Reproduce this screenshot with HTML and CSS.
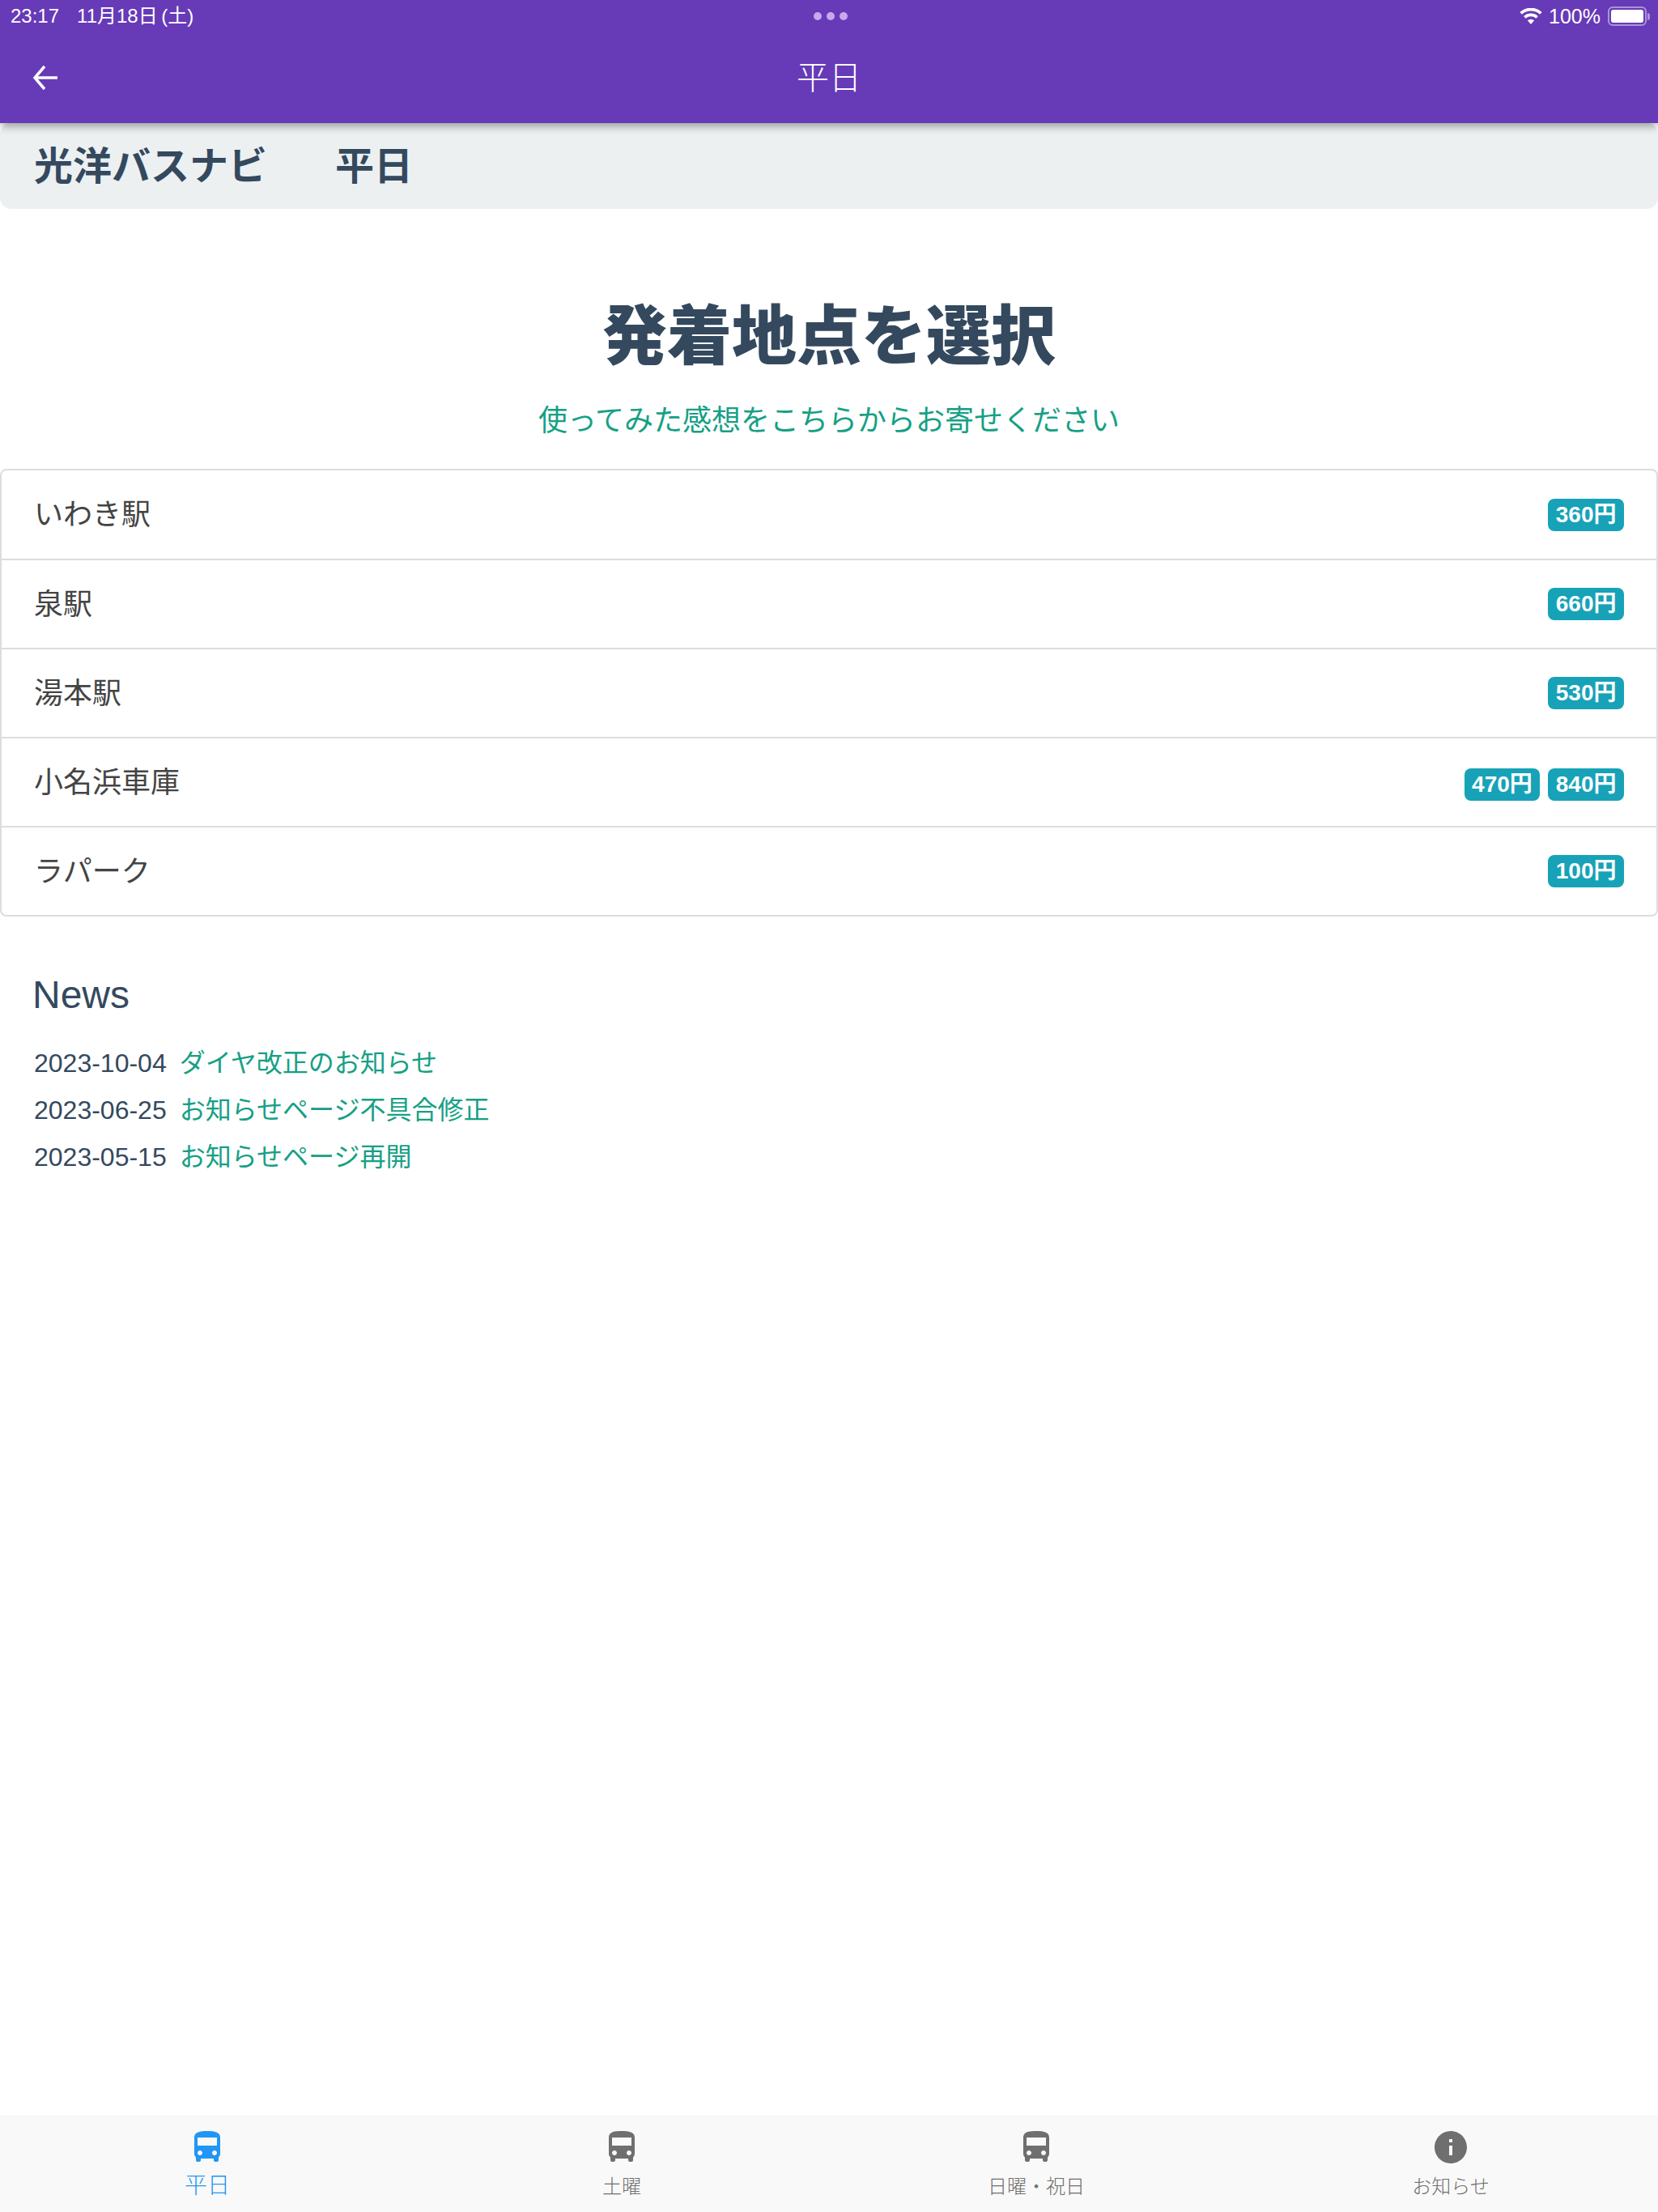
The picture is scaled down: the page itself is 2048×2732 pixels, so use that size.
FILE: index.html
```html
<!DOCTYPE html>
<html lang="ja">
<head>
<meta charset="utf-8">
<title>平日</title>
<link rel="stylesheet" href="styles.css">
</head>
<body>
<div class="page">
  <header class="header">
    <div class="status">
      <div class="status-left"><span>23:17</span><span class="status-date">11月18日 (土)</span></div>
      <div class="status-dots"><i></i><i></i><i></i></div>
      <div class="status-right">
        <svg class="wifi" viewBox="0 0 28 20"><path d="M14 20 9.800 15.200a6.400 6.400 0 0 1 8.400 0zM7.600 12.700 5.100 10a13.400 13.400 0 0 1 17.800 0l-2.500 2.700a9.800 9.800 0 0 0-12.800 0zM3 7.700.3 4.900a20.500 20.500 0 0 1 27.400 0L25 7.700a16.800 16.800 0 0 0-22 0z"/></svg>
        <span>100%</span>
        <div class="battery"><div class="battery-body"><div class="battery-fill"></div></div><div class="battery-cap"></div></div>
      </div>
    </div>
    <div class="toolbar">
      <svg class="back" viewBox="0 0 32 32"><path d="M31 16H3M15 2 3 16l12 14"/></svg>
      <div class="toolbar-title">平日</div>
    </div>
  </header>

  <main class="content">
    <div class="subhead"><span>光洋バスナビ</span><span class="subhead-day">平日</span></div>

    <div class="intro">
      <h1>発着地点を選択</h1>
      <a class="intro-link">使ってみた感想をこちらからお寄せください</a>
    </div>

    <ul class="list">
      <li class="row"><span class="label">いわき駅</span><span class="fares"><b class="fare">360円</b></span></li>
      <li class="row"><span class="label">泉駅</span><span class="fares"><b class="fare">660円</b></span></li>
      <li class="row"><span class="label">湯本駅</span><span class="fares"><b class="fare">530円</b></span></li>
      <li class="row"><span class="label">小名浜車庫</span><span class="fares fares-low"><b class="fare">470円</b><b class="fare">840円</b></span></li>
      <li class="row"><span class="label">ラパーク</span><span class="fares"><b class="fare">100円</b></span></li>
    </ul>

    <section class="news">
      <h3>News</h3>
      <p><span class="date">2023-10-04</span><a>ダイヤ改正のお知らせ</a></p>
      <p><span class="date">2023-06-25</span><a>お知らせページ不具合修正</a></p>
      <p><span class="date">2023-05-15</span><a>お知らせページ再開</a></p>
    </section>
  </main>

  <nav class="tabs">
    <div class="tab tab-active">
      <svg viewBox="0 0 24 24"><path d="M4 16c0 .88.39 1.670 1 2.220V20c0 .55.45 1 1 1h1c.55 0 1-.45 1-1v-1h8v1c0 .55.45 1 1 1h1c.55 0 1-.45 1-1v-1.780c.61-.55 1-1.340 1-2.220V6c0-3.500-3.580-4-8-4s-8 .5-8 4v10zm3.500 1c-.83 0-1.500-.67-1.500-1.500S6.670 14 7.500 14s1.500.67 1.500 1.500S8.330 17 7.500 17zm9 0c-.83 0-1.500-.67-1.500-1.500s.67-1.500 1.500-1.500 1.500.67 1.500 1.500-.67 1.500-1.500 1.500zm1.500-6H6V6h12v5z"/></svg>
      <span>平日</span>
    </div>
    <div class="tab">
      <svg viewBox="0 0 24 24"><path d="M4 16c0 .88.39 1.670 1 2.220V20c0 .55.45 1 1 1h1c.55 0 1-.45 1-1v-1h8v1c0 .55.45 1 1 1h1c.55 0 1-.45 1-1v-1.780c.61-.55 1-1.340 1-2.220V6c0-3.500-3.580-4-8-4s-8 .5-8 4v10zm3.500 1c-.83 0-1.500-.67-1.500-1.500S6.670 14 7.500 14s1.500.67 1.500 1.500S8.330 17 7.500 17zm9 0c-.83 0-1.500-.67-1.500-1.500s.67-1.500 1.500-1.500 1.500.67 1.500 1.500-.67 1.500-1.500 1.500zm1.500-6H6V6h12v5z"/></svg>
      <span>土曜</span>
    </div>
    <div class="tab">
      <svg viewBox="0 0 24 24"><path d="M4 16c0 .88.39 1.670 1 2.220V20c0 .55.45 1 1 1h1c.55 0 1-.45 1-1v-1h8v1c0 .55.45 1 1 1h1c.55 0 1-.45 1-1v-1.780c.61-.55 1-1.340 1-2.220V6c0-3.500-3.580-4-8-4s-8 .5-8 4v10zm3.500 1c-.83 0-1.500-.67-1.500-1.500S6.670 14 7.500 14s1.500.67 1.500 1.500S8.330 17 7.500 17zm9 0c-.83 0-1.500-.67-1.500-1.500s.67-1.500 1.500-1.500 1.500.67 1.500 1.500-.67 1.500-1.500 1.500zm1.500-6H6V6h12v5z"/></svg>
      <span>日曜・祝日</span>
    </div>
    <div class="tab">
      <svg viewBox="0 0 24 24"><path d="M12 2C6.480 2 2 6.480 2 12s4.480 10 10 10 10-4.480 10-10S17.520 2 12 2zm1 15h-2v-6h2v6zm0-8h-2V7h2v2z"/></svg>
      <span>お知らせ</span>
    </div>
  </nav>
</div>
</body>
</html>
```
FILE: styles.css
```css
* { box-sizing: border-box; }
html, body { margin: 0; padding: 0; background: #fff; }
body { font-family: "Liberation Sans", "Noto Sans CJK JP", sans-serif; color: #444; }
.page { display: flex; flex-direction: column; height: 2732px; overflow: hidden; }

.header { background: #673ab7; color: #fff; height: 152px; position: relative; z-index: 2; box-shadow: 0 4px 10px rgba(0,0,0,.35); flex: none; }
.status { height: 40px; display: grid; grid-template-columns: 1fr auto 1fr; align-items: center; padding: 0 10px 0 13px; font-size: 24px; line-height: 30px; }
.status-left { display: flex; align-items: baseline; gap: 22px; height: 30px; }
.status-date { word-spacing: -2px; }
.status-dots { display: flex; gap: 6px; }
.status-dots i { width: 10px; height: 10px; border-radius: 50%; background: #c6a9ee; }
.status-right { display: flex; justify-content: flex-end; align-items: center; font-size: 25px; }
.wifi { width: 28px; height: 20px; fill: #fff; margin-right: 8px; }
.battery { display: flex; align-items: center; margin-left: 9px; }
.battery-body { width: 48px; height: 24px; border: 2px solid rgba(255,255,255,.45); border-radius: 6px; padding: 2px; }
.battery-fill { width: 100%; height: 100%; background: #fff; border-radius: 3px; }
.battery-cap { width: 3px; height: 9px; background: rgba(255,255,255,.45); border-radius: 0 3px 3px 0; margin-left: 1px; }

.toolbar { height: 112px; display: flex; align-items: center; justify-content: center; position: relative; }
.back { position: absolute; left: 40px; top: 40px; width: 32px; height: 32px; fill: none; stroke: #fff; stroke-width: 3.500; }
.toolbar-title { font-size: 40px; font-weight: 300; line-height: 48px; }

.content { flex: 1; min-height: 0; }
.subhead { height: 106px; background: #ecf0f1; border-radius: 14px; padding: 0 42px 9px; display: flex; align-items: center; font-size: 48px; font-weight: 700; color: #34495e; }
.subhead-day { margin-left: 84px; }

.intro { text-align: center; padding-top: 100px; }
.intro h1 { margin: 0; font-size: 80px; line-height: 116px; font-weight: 900; color: #34495e; }
.intro-link { display: block; margin-top: 20px; font-size: 36px; line-height: 52px; color: #16a085; }

.list { list-style: none; margin: 33px 0 0; padding: 0; border: 2px solid #ddd; border-radius: 8px; }
.row { height: 110px; padding: 0 40px; display: flex; align-items: center; justify-content: space-between; font-size: 36px; border-top: 2px solid #ddd; }
.row:first-child { height: 109px; border-top: 0; }
.label { padding-bottom: 7px; }
.fares { display: flex; gap: 10px; }
.fares-low { padding-top: 6px; }
.fare { height: 40px; line-height: 40px; padding: 0 9.500px; border-radius: 8px; background: #17a2b8; color: #fff; font-size: 28px; font-weight: 700; }

.news { padding: 0 40px; margin-top: 64px; font-size: 32px; color: #34495e; }
.news h3 { margin: 0 0 22px; font-size: 48px; line-height: 66px; font-weight: 400; }
.news p { margin: 0; line-height: 58px; }
.date { margin: 0 16px 0 2px; }
.news a { color: #16a085; }

.tabs { height: 119px; flex: none; background: #f9f9f9; border-top: 1px solid #f4f4f4; display: grid; grid-template-columns: repeat(4, 1fr); }
.tab { display: flex; flex-direction: column; align-items: center; padding-top: 14px; color: #6f6f6f; font-size: 24px; font-weight: 300; }
.tab svg { width: 48px; height: 48px; fill: #6f6f6f; flex: none; }
.tab span { line-height: 30px; margin-top: 10px; }
.tab-active { color: #2196f3; font-size: 28px; }
.tab-active svg { fill: #2196f3; }
.tab-active span { margin-top: 9px; }
```
